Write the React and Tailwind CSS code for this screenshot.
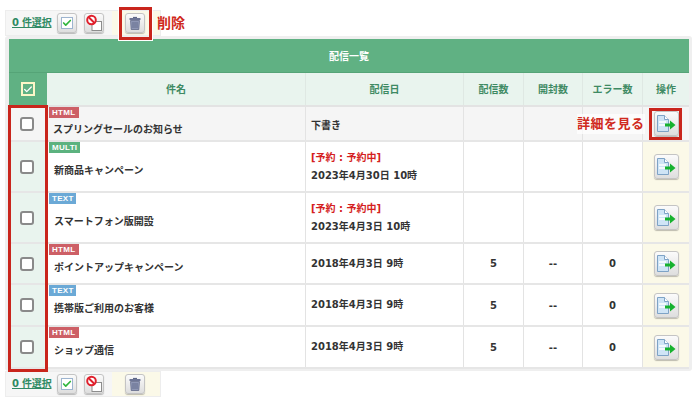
import { Check } from 'lucide-react'

const FONT = { fontFamily: '"DejaVu Sans", "Noto Sans CJK JP", sans-serif' }

const TAG_CLS = {
  HTML: 'bg-[#cd5f66] w-[30px]',
  MULTI: 'bg-[#5cb27f] w-[31px]',
  TEXT: 'bg-[#6ba9d6] w-[27px]',
}

const ROWS = [
  { tag: 'HTML', name: 'スプリングセールのお知らせ', draft: true, h: 'h-[35px]', pt: 'pt-[12px]', pl: 'pl-[6px]', gray: true },
  { tag: 'MULTI', name: '新商品キャンペーン', status: '[予約 : 予約中]', date: '2023年4月30日 10時', h: 'h-[51px]', pt: 'pt-[8px]', pl: 'pl-[7px]' },
  { tag: 'TEXT', name: 'スマートフォン版開設', status: '[予約 : 予約中]', date: '2023年4月3日 10時', h: 'h-[51px]', pt: 'pt-[8px]', pl: 'pl-[7px]' },
  { tag: 'HTML', name: 'ポイントアップキャンペーン', date: '2018年4月3日 9時', sent: '5', open: '--', err: '0', h: 'h-[41px]', pt: 'pt-[7px]', pl: 'pl-[7px]' },
  { tag: 'TEXT', name: '携帯版ご利用のお客様', date: '2018年4月3日 9時', sent: '5', open: '--', err: '0', h: 'h-[42px]', pt: 'pt-[7px]', pl: 'pl-[7px]' },
  { tag: 'HTML', name: 'ショップ通信', date: '2018年4月3日 9時', sent: '5', open: '--', err: '0', h: 'h-[42px]', pt: 'pt-[6px]', pl: 'pl-[7px]' },
]

const HEADERS = [
  { label: '配信日', cls: 'w-[158px]' },
  { label: '配信数', cls: 'w-[60px]' },
  { label: '開封数', cls: 'w-[59px]' },
  { label: 'エラー数', cls: 'w-[60px]' },
  { label: '操作', cls: 'flex-1' },
]

function IconButton({ children, cls = 'w-[20px] h-[20px]' }) {
  return (
    <div className={`${cls} flex items-center justify-center rounded-[3px] border border-[#c4c4c4] bg-gradient-to-b from-[#fbfbfb] to-[#dedede] shadow-[0_1px_1px_rgba(0,0,0,0.25)]`}>
      {children}
    </div>
  )
}

function DetailIcon() {
  return (
    <svg width="19" height="17" viewBox="0 0 19 17">
      <path d="M0.500 0.500h7l4 4v12h-11z" fill="#cfe4f6" stroke="#7ea3c6" />
      <path d="M7.500 0.500v4h4" fill="#fff" stroke="#7ea3c6" />
      <path d="M2 7h7M2 10h6" stroke="#fff" strokeWidth="1.400" />
      <path d="M8 8.500h5V5.500l5.500 4.500-5.500 4.500v-3H8z" fill="#16b22f" />
    </svg>
  )
}

function TrashIcon() {
  return (
    <svg width="12" height="14" viewBox="0 0 12 14">
      <path d="M4 1.500h4" stroke="#5e6787" strokeWidth="1.200" />
      <rect x="0.500" y="2" width="11" height="2" rx="0.600" fill="#6d7595" />
      <path d="M1.500 4.500h9l-0.700 9h-7.600z" fill="#8f97b5" stroke="#565f80" strokeWidth="0.700" />
      <path d="M4 6v6M6 6v6M8 6v6" stroke="#5b6486" strokeWidth="0.800" />
    </svg>
  )
}

function BanIcon() {
  return (
    <svg width="18" height="18" viewBox="0 0 18 18">
      <rect x="7" y="7.500" width="9.500" height="9" fill="#fff" stroke="#8d8d8d" />
      <circle cx="6.500" cy="6" r="4.300" fill="#fff" stroke="#e0202c" strokeWidth="2" />
      <path d="M3.500 3l6 6" stroke="#e0202c" strokeWidth="2" />
    </svg>
  )
}

function CheckMarkIcon() {
  return (
    <div className="w-[12px] h-[12px] flex items-center justify-center border border-[#9db4cf] bg-white">
      <Check size={10} strokeWidth={4} className="text-[#2fb53c]" />
    </div>
  )
}

function Toolbar({ cls }) {
  return (
    <div className={`${cls} flex h-[26px] w-[156px] bg-[#f6f6f6] border border-[#ededed]`}>
      <div className="flex items-center w-[106px] pl-[6px]">
        <a className="text-[#2f8a63] underline font-bold text-[10px] leading-none w-[40px] whitespace-nowrap tracking-[-0.2px]">0 件選択</a>
        <div className="ml-[5px]"><IconButton><CheckMarkIcon /></IconButton></div>
        <div className="ml-[7px]"><IconButton><BanIcon /></IconButton></div>
      </div>
      <div className="flex-1 bg-[#fbf9e8] flex items-center justify-center pr-[2px]">
        <IconButton><TrashIcon /></IconButton>
      </div>
    </div>
  )
}

function Cell({ cls = '', children }) {
  return <div className={`border-l border-[#e3e3e3] flex items-center justify-center text-[10px] font-bold text-[#333] ${cls}`}>{children}</div>
}

function Row({ row }) {
  return (
    <div className={`flex ${row.h} border-b-2 border-[#e6e6e6] ${row.gray ? 'bg-[#f5f5f5]' : 'bg-white'}`}>
      <div className={`w-[38px] shrink-0 flex items-center justify-center pr-[2px] ${row.gray ? 'bg-[#f5f5f5]' : 'bg-[#e9f4ee]'}`}>
        <div className="w-[14px] h-[14px] rounded-[3px] border-2 border-[#8a8a8a] bg-white" />
      </div>
      <div className={`w-[258px] shrink-0 relative flex items-center ${row.pt} ${row.pl} text-[10px] font-bold text-[#333] whitespace-nowrap`}>
        <span className={`absolute left-[2px] top-0 h-[11px] text-white text-[8px] font-bold leading-[11px] pl-[3px] tracking-[0.3px] ${TAG_CLS[row.tag]}`} style={{ fontFamily: '"Liberation Sans", sans-serif' }}>
          {row.tag}
        </span>
        {row.name}
      </div>
      <Cell cls={`w-[158px] !justify-start pl-[5px] ${row.draft ? 'pt-[4px]' : ''}`}>
        {row.draft ? '下書き' : (
          <div className="leading-[18px]">
            {row.status && <div className="text-[#d42020]">{row.status}</div>}
            <div>{row.date}</div>
          </div>
        )}
      </Cell>
      <Cell cls="w-[60px]">{row.sent}</Cell>
      <Cell cls="w-[59px]">{row.open}</Cell>
      <Cell cls="w-[60px]">{row.err}</Cell>
      <Cell cls={`flex-1 ${row.gray ? '' : 'bg-[#fbf9e8]'}`}>
        <IconButton cls="w-[25px] h-[25px]"><DetailIcon /></IconButton>
      </Cell>
    </div>
  )
}

export default function App() {
  return (
    <div className="relative w-[700px] h-[401px] bg-white overflow-hidden pt-[10px]" style={FONT}>
      <Toolbar cls="ml-[5px]" />
      <div className="ml-[5px] w-[687px] h-[335px] bg-[#efefef] rounded-[3px] pl-[4px] pr-[3px] pt-[3px]">
        <div className="bg-[#60b183] h-[34px] border-b border-[#55a477] flex items-center justify-center pt-[2px] text-white text-[10px] font-bold">配信一覧</div>
        <div className="flex h-[34px] bg-[#e9f4ee] border-b-2 border-[#e3e3e3] text-[#3e8a63] text-[10px] font-bold">
          <div className="w-[38px] shrink-0 bg-[#60b183] flex items-center justify-center">
            <div className="w-[14px] h-[14px] border-2 border-[#fdf6c8] bg-[#60b183] flex items-center justify-center">
              <Check size={11} strokeWidth={3} className="text-white" />
            </div>
          </div>
          <div className="w-[258px] shrink-0 flex items-center justify-center">件名</div>
          {HEADERS.map(h => (
            <div key={h.label} className={`${h.cls} border-l border-[#dfe8e3] flex items-center justify-center`}>{h.label}</div>
          ))}
        </div>
        {ROWS.map(row => <Row key={row.name} row={row} />)}
      </div>
      <Toolbar cls="ml-[5px]" />

      {/* 注釈 */}
      <div className="absolute left-[119px] top-[7px] w-[33px] h-[33px] border-[3px] border-[#c9251c] shadow-[0_0_0_1px_white]" />
      <span className="absolute left-[157px] top-[13px] text-[14px] leading-[20px] font-bold text-[#d02a20]">削除</span>
      <div className="absolute left-[8px] top-[105px] w-[40px] h-[267px] border-[3px] border-[#c9251c]" />
      <div className="absolute left-[649px] top-[108px] w-[33px] h-[32px] border-[3px] border-[#c9251c]" />
      <span className="absolute left-[577px] top-[114px] text-[13px] leading-[20px] font-bold text-[#d02a20] bg-white/70 whitespace-nowrap tracking-[0.5px]">詳細を見る</span>
    </div>
  )
}
